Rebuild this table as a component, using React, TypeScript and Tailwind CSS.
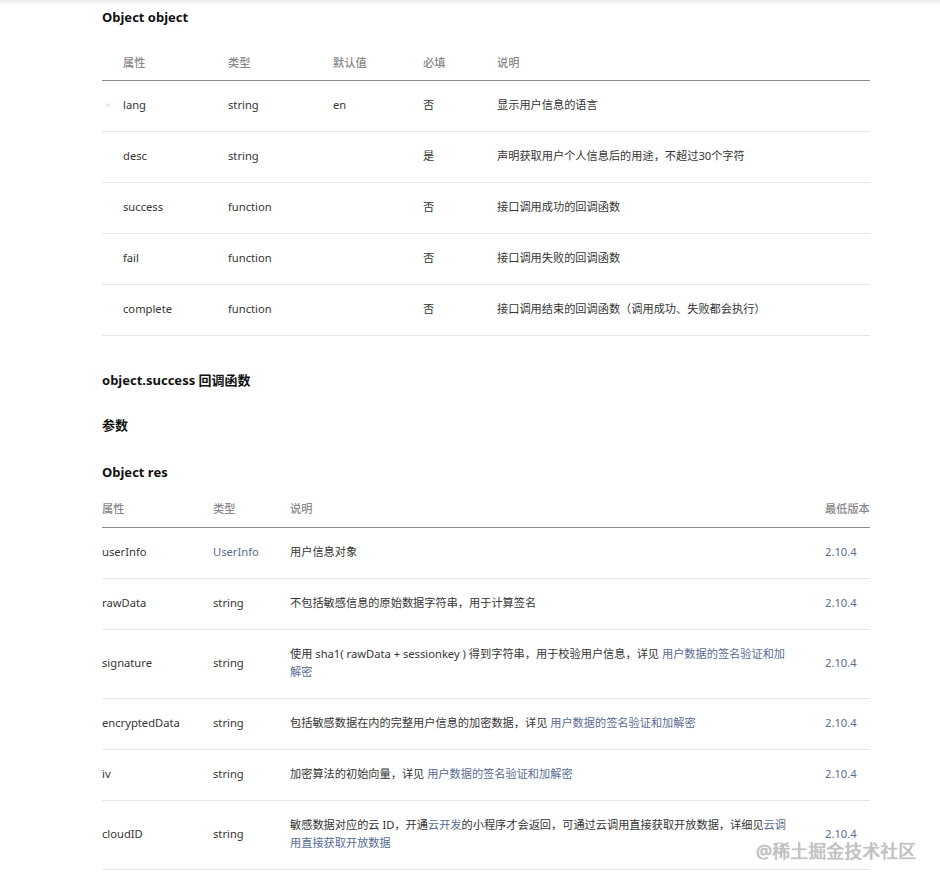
import { ChevronDown } from 'lucide-react';
import type { ReactNode } from 'react';

const font = { fontFamily: '"Noto Sans", "Noto Sans CJK SC", sans-serif' };

const link = 'text-[#576b95]';

type Param = { name: string; type: string; def?: string; req: string; desc: string; open?: boolean };

const params: Param[] = [
  { name: 'lang', type: 'string', def: 'en', req: '否', desc: '显示用户信息的语言', open: true },
  { name: 'desc', type: 'string', req: '是', desc: '声明获取用户个人信息后的用途，不超过30个字符' },
  { name: 'success', type: 'function', req: '否', desc: '接口调用成功的回调函数' },
  { name: 'fail', type: 'function', req: '否', desc: '接口调用失败的回调函数' },
  { name: 'complete', type: 'function', req: '否', desc: '接口调用结束的回调函数（调用成功、失败都会执行）' },
];

type Res = { name: string; type: ReactNode; desc: ReactNode };

const signLink = <span className={link}>用户数据的签名验证和加解密</span>;

const results: Res[] = [
  { name: 'userInfo', type: <span className={link}>UserInfo</span>, desc: '用户信息对象' },
  { name: 'rawData', type: 'string', desc: '不包括敏感信息的原始数据字符串，用于计算签名' },
  {
    name: 'signature',
    type: 'string',
    desc: <>使用 sha1( rawData + sessionkey ) 得到字符串，用于校验用户信息，详见 {signLink}</>,
  },
  {
    name: 'encryptedData',
    type: 'string',
    desc: <>包括敏感数据在内的完整用户信息的加密数据，详见 {signLink}</>,
  },
  { name: 'iv', type: 'string', desc: <>加密算法的初始向量，详见 {signLink}</> },
  {
    name: 'cloudID',
    type: 'string',
    desc: (
      <>
        敏感数据对应的云 ID，开通<span className={link}>云开发</span>的小程序才会返回，可通过云调用直接获取开放数据，详细见
        <span className={link}>云调用直接获取开放数据</span>
      </>
    ),
  },
];

function Heading({ children, className }: { children: ReactNode; className?: string }) {
  return <h3 className={`text-[13px] leading-[20px] font-bold text-[#111] ${className ?? ''}`}>{children}</h3>;
}

const cell = 'pt-[15px] pb-[17px] border-b border-[#e6e6e6]';

function App() {
  return (
    <div className="min-h-screen bg-white text-[11.2px] leading-[18px] text-[#353535] relative" style={font}>
      <div className="h-[4px] bg-gradient-to-b from-[#ececec] to-[#f8f8f8]" />
      <div className="pl-[102px] w-[870px]">
        <Heading className="mt-[3px] mb-[17px]">Object object</Heading>

        <div className="grid grid-cols-[126px_105px_90px_74px_1fr]">
          <div className="contents text-[#888] font-medium">
            {['属性', '类型', '默认值', '必填', '说明'].map((h, i) => (
              <div key={h} className={`h-[37px] pt-[1px] flex items-center border-b border-[#8c8c8c] ${i === 0 ? 'pl-[21px]' : ''}`}>
                {h}
              </div>
            ))}
          </div>
          {params.map((p) => (
            <div key={p.name} className="contents">
              <div className={`flex items-center ${cell}`}>
                <span className="w-[21px] flex items-center">
                  {p.open && <ChevronDown size={10} strokeWidth={1.5} className="text-[#aaa] ml-[1px]" />}
                </span>
                {p.name}
              </div>
              <div className={cell}>{p.type}</div>
              <div className={cell}>{p.def ?? ''}</div>
              <div className={cell}>{p.req}</div>
              <div className={cell}>{p.desc}</div>
            </div>
          ))}
        </div>

        <Heading className="mt-[34px]">object.success 回调函数</Heading>
        <Heading className="mt-[25px]">参数</Heading>
        <Heading className="mt-[27px] mb-[9px]">Object res</Heading>

        <div className="grid grid-cols-[111px_77px_535px_1fr]">
          <div className="contents text-[#888] font-medium">
            {['属性', '类型', '说明', '最低版本'].map((h) => (
              <div key={h} className="h-[37px] flex items-center border-b border-[#8c8c8c] whitespace-nowrap">
                {h}
              </div>
            ))}
          </div>
          {results.map((r) => (
            <div key={r.name} className="contents">
              <div className={`flex items-center ${cell}`}>{r.name}</div>
              <div className={`flex items-center ${cell}`}>{r.type}</div>
              <div className={`pr-[30px] ${cell}`}>{r.desc}</div>
              <div className={`flex items-center ${cell} ${link}`}>2.10.4</div>
            </div>
          ))}
        </div>
      </div>

      <div
        className="absolute left-[756px] top-[840px] text-[18px] leading-[22px] text-[#c4c4c4] [text-shadow:0_0_1px_#9a9a9a]"
        style={font}
      >
        @稀土掘金技术社区
      </div>
    </div>
  );
}

export default App;
